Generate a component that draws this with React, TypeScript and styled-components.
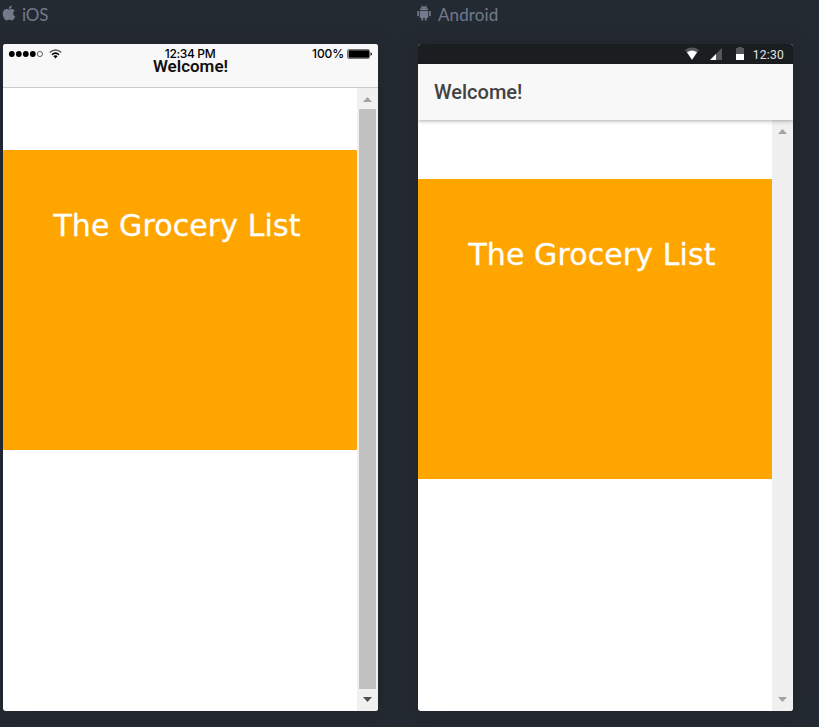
import React from "react";
import styled, { createGlobalStyle } from "styled-components";
import { IoLogoApple } from "react-icons/io";

type Platform = "ios" | "android";

const GlobalStyle = createGlobalStyle`
  * { box-sizing: border-box; }
  body { margin: 0; background: #242a31; overflow: hidden; }
`;

const Page = styled.main`
  display: flex;
  gap: 40px;
  height: 727px;
  padding-left: 3px;
  background: #242a31;
`;

const Preview = styled.section`
  display: flex;
  flex-direction: column;
  width: 375px;
`;

const PlatformLabel = styled.h2<{ $platform: Platform }>`
  display: flex;
  align-items: center;
  gap: ${(p) => (p.$platform === "ios" ? 3 : 4)}px;
  height: 44px;
  margin: 0 0 0 -4px;
  padding-bottom: 14px;
  color: #727a8c;
  font: 400 17px/28px Lato, sans-serif;
  letter-spacing: ${(p) => (p.$platform === "ios" ? -0.2 : 0.1)}px;

  svg { flex: none; margin-top: -5px; }
`;

const Phone = styled.article`
  position: relative;
  display: flex;
  flex-direction: column;
  height: 667px;
  overflow: hidden;
  border-radius: 3px;
  background: #fff;
`;

const PhoneShadow = styled.div`
  border-radius: 3px;
  box-shadow: 0 2px 20px rgba(24, 20, 32, 0.25);
`;

const IosStatus = styled.div`
  position: absolute;
  z-index: 2;
  inset: 0 0 auto;
  display: grid;
  grid-template-columns: 1fr auto 1fr;
  align-items: center;
  height: 20px;
  padding: 0 6px 0 5px;
  color: #000;
  font: 500 12px/20px Inter, sans-serif;
`;

const StatusLeft = styled.div`
  display: flex;
  align-items: center;
  gap: 6px;
`;

const StatusRight = styled.div`
  display: flex;
  align-items: center;
  justify-content: flex-end;
  gap: 3px;
`;

const Clock = styled.time`
  letter-spacing: -0.35px;
`;

const Charge = styled.span`
  letter-spacing: -0.1px;
`;

const AndroidStatus = styled.div`
  display: flex;
  flex: none;
  align-items: center;
  justify-content: flex-end;
  height: 20px;
  padding-right: 9px;
  background: #1b1e21;
  color: #e4e4e5;
  font: 400 12px/20px Roboto, sans-serif;

  svg { flex: none; margin-right: 8px; }
`;

const AndroidClock = styled.time`
  padding-top: 2px;
  letter-spacing: 0.25px;
`;

const Header = styled.header<{ $platform: Platform }>`
  z-index: 1;
  flex: none;
  height: ${(p) => (p.$platform === "ios" ? 44 : 56)}px;
  background: #f8f8f8;
  ${(p) =>
    p.$platform === "ios"
      ? "padding-top: 12px; border-bottom: 1px solid #cacaca; text-align: center;"
      : "padding: 18px 16px 0; box-shadow: 0 1px 4px rgba(0, 0, 0, .33);"}
`;

const ScreenTitle = styled.h1<{ $platform: Platform }>`
  margin: 0;
  color: ${(p) => (p.$platform === "ios" ? "#111" : "#424242")};
  font: ${(p) => (p.$platform === "ios" ? "600 17px/20px" : "500 20px/20px")} Roboto, sans-serif;
`;

const Viewport = styled.div`
  display: flex;
  flex: 1;
`;

const Content = styled.div<{ $platform: Platform }>`
  flex: 1;
  padding-top: ${(p) => (p.$platform === "ios" ? 62 : 59)}px;
`;

const Banner = styled.div`
  height: 300px;
  padding: 58px 6px 0 0;
  background: #ffa500;
  color: #fff;
  text-align: center;
  font: 400 30px/36px "DejaVu Sans", sans-serif;
  letter-spacing: 0.1px;
  -webkit-text-stroke: 0.3px #fff;
`;

const ScrollTrack = styled.div`
  display: flex;
  flex-direction: column;
  align-items: center;
  justify-content: space-between;
  width: 21px;
  background: #f0f0f0;
`;

const ScrollButton = styled.div<{ $up?: boolean }>`
  display: flex;
  flex: none;
  align-items: center;
  justify-content: center;
  height: ${(p) => (p.$up ? 21 : 22)}px;
  padding: ${(p) => (p.$up ? "2px 0 0" : "0 0 2px")};
`;

const ScrollThumb = styled.div`
  flex: 1;
  width: 17px;
  background: #c1c1c1;
`;

function AndroidIcon() {
  return (
    <svg width="20" height="20" viewBox="0 0 20 20" fill="none" stroke="currentColor" strokeLinecap="round">
      <path d="M6 7.2C6.2 4.5 7.8 3.2 10 3.2S13.8 4.5 14 7.2Z" fill="currentColor" stroke="none" />
      <path d="M7.3 2.5L8.1 3.8M12.7 2.5L11.9 3.8" strokeWidth=".6" />
      <path d="M5.8 7.9H14.2V14.2Q14.2 15 13.4 15H6.6Q5.8 15 5.8 14.2Z" fill="currentColor" stroke="none" />
      <path d="M4.1 8.7V12.5M15.9 8.7V12.5M8.3 15V16.9M11.7 15V16.9" strokeWidth="1.7" />
      <path d="M8.2 5.5H8.21M11.8 5.5H11.81" stroke="#242a31" strokeWidth=".8" />
    </svg>
  );
}

function Arrow({ up, active }: { up?: boolean; active?: boolean }) {
  return (
    <svg width="9" height="5" viewBox="0 0 9 5">
      <path d={up ? "M0 5L4.5 0L9 5Z" : "M0 0H9L4.5 5Z"} fill={active ? "#505050" : "#a3a3a3"} />
    </svg>
  );
}

function Scrollbar({ active }: { active?: boolean }) {
  return (
    <ScrollTrack>
      <ScrollButton $up><Arrow up /></ScrollButton>
      {active && <ScrollThumb />}
      <ScrollButton><Arrow active={active} /></ScrollButton>
    </ScrollTrack>
  );
}

function IosStatusBar() {
  return (
    <IosStatus>
      <StatusLeft>
        <svg width="35" height="6" viewBox="0 0 35 6">
          {[3.8, 10.8, 17.8, 24.8].map((x) => <circle key={x} cx={x} cy="3" r="2.9" />)}
          <circle cx="31.9" cy="3" r="2.6" fill="none" stroke="#000" strokeWidth=".6" />
        </svg>
        <svg width="13" height="10" viewBox="0 0 13 10" fill="none" stroke="#000">
          <path d="M.7 3.5Q6.5-1.4 12.3 3.5" strokeWidth="1.5" opacity=".65" />
          <path d="M2.9 5.7Q6.5 2.6 10.1 5.7" strokeWidth="1.5" />
          <path d="M4.3 7.1Q6.5 5.4 8.7 7.1L6.5 9.4Z" fill="#000" stroke="none" />
        </svg>
      </StatusLeft>
      <Clock>12:34 PM</Clock>
      <StatusRight>
        <Charge>100%</Charge>
        <svg width="25" height="10" viewBox="0 0 25 10">
          <rect x=".5" y=".5" width="22" height="9" rx="1.5" fill="#f8f8f8" stroke="#777" />
          <rect x="1.5" y="1.2" width="20.5" height="7.6" rx=".8" />
          <path d="M23.5 3.3Q25 3.8 25 5T23.5 6.7Z" />
        </svg>
      </StatusRight>
    </IosStatus>
  );
}

function AndroidStatusBar() {
  return (
    <AndroidStatus>
      <svg width="60" height="14" viewBox="0 0 60 14">
        <path d="M0 3Q7-1.8 14 3L7 13Z" fill="#55585b" />
        <path d="M2 5.2Q7 2 12 5.2L7 12.7Z" fill="#fff" />
        <path d="M25 13L37 1V13Z" fill="#55585b" />
        <path d="M25 13L31 7V13Z" fill="#fff" />
        <path d="M51 1H53V0H57V1H59V13H51Z" fill="#55585b" />
        <path d="M51 7H59V13H51Z" fill="#fff" />
      </svg>
      <AndroidClock>12:30</AndroidClock>
    </AndroidStatus>
  );
}

function PhonePreview({ platform }: { platform: Platform }) {
  const ios = platform === "ios";
  return (
    <Preview>
      <PlatformLabel $platform={platform}>
        {ios ? <IoLogoApple size={20} /> : <AndroidIcon />}
        {ios ? "iOS" : "Android"}
      </PlatformLabel>
      <PhoneShadow>
        <Phone>
          {!ios && <AndroidStatusBar />}
          <Header $platform={platform}>
            <ScreenTitle $platform={platform}>Welcome!</ScreenTitle>
          </Header>
          {ios && <IosStatusBar />}
          <Viewport>
            <Content $platform={platform}>
              <Banner>The Grocery List</Banner>
            </Content>
            <Scrollbar active={ios} />
          </Viewport>
        </Phone>
      </PhoneShadow>
    </Preview>
  );
}

export default function App() {
  return (
    <>
      <GlobalStyle />
      <Page>
        <PhonePreview platform="ios" />
        <PhonePreview platform="android" />
      </Page>
    </>
  );
}
